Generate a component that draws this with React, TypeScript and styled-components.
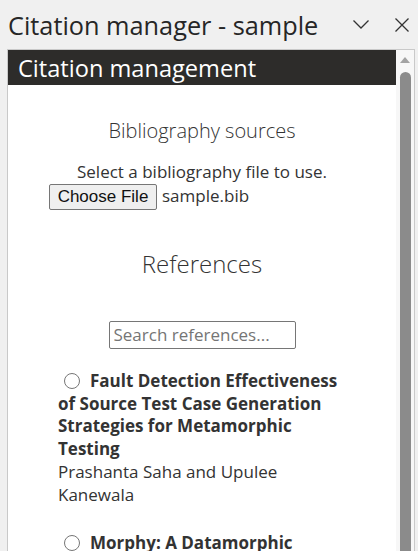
import React from 'react';
import styled, { createGlobalStyle } from 'styled-components';

const GlobalStyle = createGlobalStyle`
    html, body {
        margin: 0;
        padding: 0;
        height: 100%;
        overflow: hidden;
        background: #f0f0f0;
    }
    body {
        font-family: "Open Sans", "Noto Sans", sans-serif;
        color: #333;
    }
`;

const Window = styled.div`
    height: 551px;
    display: flex;
    flex-direction: column;
    overflow: hidden;
    background: #f0f0f0;
`;

const TitleBar = styled.div`
    height: 49px;
    flex: none;
    display: flex;
    align-items: center;
    padding: 0 9px 0 8px;
    box-sizing: border-box;
`;

const Title = styled.h1`
    flex: 1;
    margin: 0;
    font-size: 25.3px;
    font-weight: 400;
    line-height: 30px;
    color: #262626;
    white-space: nowrap;
`;

const IconButton = styled.button<{ $gap?: number }>`
    padding: 0;
    margin-left: ${(p) => p.$gap ?? 0}px;
    border: none;
    background: transparent;
    display: flex;
    align-items: center;
    justify-content: center;
    color: #333;
`;

const Panel = styled.div`
    flex: 1;
    min-height: 0;
    width: 408px;
    margin-left: 7px;
    box-sizing: border-box;
    border: 1px solid #c9c9c9;
    border-bottom: none;
    background: #fff;
    display: flex;
`;

const Main = styled.div`
    flex: 1;
    display: flex;
    flex-direction: column;
    overflow: hidden;
`;

const Header = styled.div`
    height: 35px;
    flex: none;
    background: #2d2c2a;
    color: #fff;
    font-size: 23.6px;
    line-height: 36px;
    padding-left: 10px;
    white-space: nowrap;
`;

const Content = styled.div`
    text-align: center;
    font-size: 17px;
    line-height: 22.8px;
    color: #333;
`;

const Heading = styled.h2<{ $size: number; $top: number }>`
    margin: ${(p) => p.$top}px 0 0;
    font-size: ${(p) => p.$size}px;
    font-weight: 300;
    line-height: ${(p) => Math.round(p.$size * 1.35)}px;
    color: #333;
`;

const Hint = styled.p`
    margin: 17px 0 0;
`;

const FileRow = styled.div`
    width: 306px;
    margin: 0 auto;
    display: flex;
    align-items: center;
    gap: 5px;
    text-align: left;
`;

const FileButton = styled.button`
    width: 108px;
    height: 26px;
    padding: 0;
    box-sizing: border-box;
    border: 1px solid #767676;
    border-radius: 2px;
    background: #efefef;
    font-family: "Liberation Sans", Arial, sans-serif;
    font-size: 17px;
    color: #111;
`;

const Search = styled.input`
    display: block;
    width: 187px;
    height: 28px;
    margin: 41px auto 0;
    padding: 0 4px;
    box-sizing: border-box;
    border: 1px solid #767676;
    border-radius: 2px;
    font-family: inherit;
    font-size: 17px;
    color: #333;
    &::placeholder {
        color: #757575;
    }
`;

const List = styled.ul`
    list-style: none;
    margin: 21px 50px 0;
    padding: 0;
    text-align: left;
`;

const Item = styled.li`
    margin-bottom: 25px;
`;

const Radio = styled.span`
    display: inline-block;
    width: 16px;
    height: 16px;
    box-sizing: border-box;
    margin: 0 10px 0 6px;
    border: 1px solid #767676;
    border-radius: 50%;
    vertical-align: -2px;
`;

const RefTitle = styled.strong`
    font-weight: 700;
`;

const Authors = styled.div``;

const Scrollbar = styled.div`
    width: 18px;
    flex: none;
    background: #f7f7f7;
    display: flex;
    flex-direction: column;
    align-items: center;
    padding-top: 7px;
    box-sizing: border-box;
`;

const Thumb = styled.div`
    flex: 1;
    width: 11px;
    margin-top: 9px;
    background: #8b8b8b;
    border-radius: 6px 6px 0 0;
`;

const refs = [
    {
        title: 'Fault Detection Effectiveness of Source Test Case Generation Strategies for Metamorphic Testing',
        authors: 'Prashanta Saha and Upulee Kanewala',
    },
    {
        title: 'Morphy: A Datamorphic Software Test Automation Tool',
        authors: 'Hong Zhu, Ian Bayley, Dongmei Liu and Xiaoyu Zheng',
    },
];

const App = () => {
    return (
        <>
            <GlobalStyle />
            <Window>
                <TitleBar>
                    <Title>Citation manager - sample</Title>
                    <IconButton aria-label="collapse">
                        <svg width="16" height="9" viewBox="0 0 16 9">
                            <path d="M0.5 0.5 L8 8 L15.5 0.5" fill="none" stroke="#333" strokeWidth="1.3" />
                        </svg>
                    </IconButton>
                    <IconButton aria-label="close" $gap={26}>
                        <svg width="14" height="14" viewBox="0 0 14 14">
                            <path d="M0.5 0.5 L13.5 13.5 M13.5 0.5 L0.5 13.5" fill="none" stroke="#333" strokeWidth="1.3" />
                        </svg>
                    </IconButton>
                </TitleBar>
                <Panel>
                    <Main>
                        <Header>Citation management</Header>
                        <Content>
                            <Heading $size={20} $top={32}>Bibliography sources</Heading>
                            <Hint>Select a bibliography file to use.</Hint>
                            <FileRow>
                                <FileButton>Choose File</FileButton>
                                <span>sample.bib</span>
                            </FileRow>
                            <Heading $size={24} $top={38}>References</Heading>
                            <Search placeholder="Search references..." />
                            <List>
                                {refs.map((r) => (
                                    <Item key={r.title}>
                                        <Radio />
                                        <RefTitle>{r.title}</RefTitle>
                                        <Authors>{r.authors}</Authors>
                                    </Item>
                                ))}
                            </List>
                        </Content>
                    </Main>
                    <Scrollbar>
                        <svg width="10" height="6" viewBox="0 0 10 6">
                            <path d="M5 0 L10 6 L0 6 Z" fill="#a3a3a3" />
                        </svg>
                        <Thumb />
                    </Scrollbar>
                </Panel>
            </Window>
        </>
    );
};

export default App;
